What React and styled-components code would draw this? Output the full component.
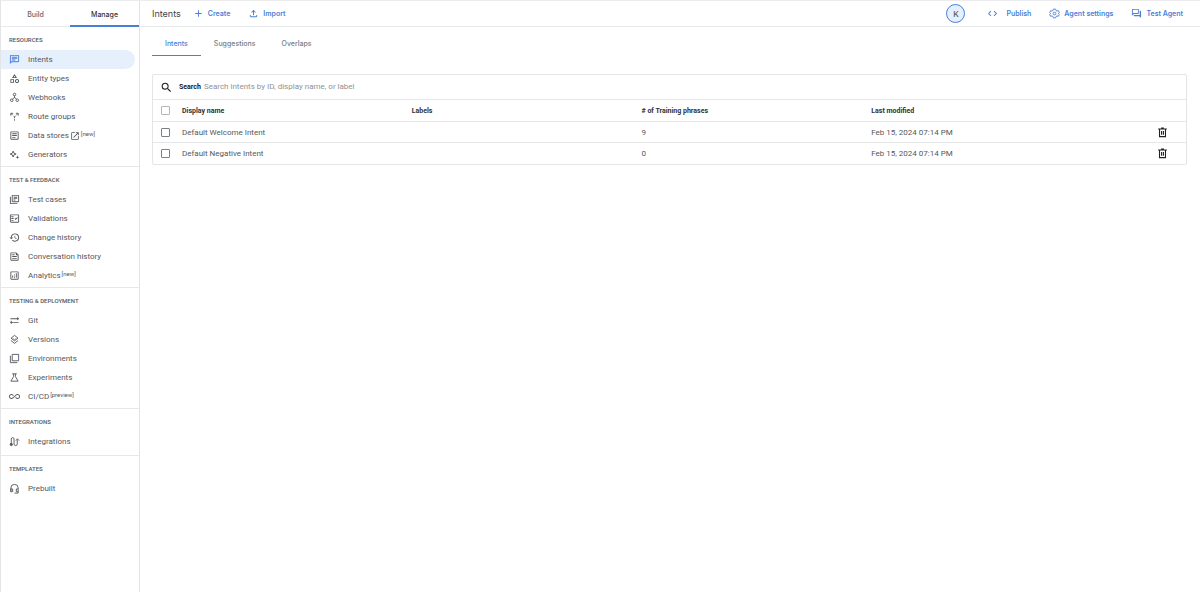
import styled, { createGlobalStyle } from "styled-components";
import {
  MdAdd,
  MdAllInclusive,
  MdCode,
  MdHistory,
  MdOpenInNew,
  MdOutlineAnalytics,
  MdOutlineArticle,
  MdOutlineCategory,
  MdOutlineChat,
  MdOutlineFactCheck,
  MdOutlineFeed,
  MdOutlineFileUpload,
  MdOutlineForum,
  MdOutlineLibraryBooks,
  MdSearch,
  MdSyncAlt,
} from "react-icons/md";

const blue = "#4a7fd6";

const Svg = ({ children, ...props }) => (
  <svg
    viewBox="0 0 24 24"
    width="1em"
    height="1em"
    fill="none"
    stroke="currentColor"
    strokeWidth="2"
    {...props}
  >
    {children}
  </svg>
);

const WebhookIcon = () => (
  <Svg>
    <circle cx="12" cy="5.500" r="2.800" />
    <circle cx="6" cy="18" r="2.800" />
    <circle cx="18" cy="18" r="2.800" />
    <path d="M12 8v5M12 12l-4.500 3.500M12 12l4.500 3.500" />
  </Svg>
);

const RouteIcon = () => (
  <Svg>
    <path d="M12 21v-3M12 16v-3l-2-2M8 9 4.500 5.500M12 13l3-3M16.500 8.500l3-3M4 10V5h5M15 5h5v5" />
  </Svg>
);

const SparkIcon = () => (
  <Svg>
    <path d="M9 4.500l1.800 4.700L15.500 11l-4.700 1.800L9 17.500l-1.800-4.700L2.500 11l4.700-1.800z" />
    <path
      d="M18.500 14l1.200 2.800 2.800 1.200-2.800 1.200-1.200 2.800-1.200-2.800-2.800-1.200 2.800-1.200z"
      fill="currentColor"
      stroke="none"
    />
  </Svg>
);

const VersionsIcon = () => (
  <Svg>
    <path d="M12 3l7.500 6-7.500 6-7.500-6zM4 14l8 6.500 8-6.500" />
    <path d="M8 9.500l4 3 4-3" strokeWidth="1.500" />
  </Svg>
);

const EnvironmentIcon = () => (
  <Svg>
    <path d="M7 3h14v14H7zM3 6v15h15" />
  </Svg>
);

const FlaskIcon = () => (
  <Svg>
    <path d="M7 4h10M10 4v6L4 20h16l-6-10V4" />
  </Svg>
);

const IntegrationIcon = () => (
  <Svg>
    <path d="M5 17V6.500a3 3 0 0 1 6 0v11a3.500 3.500 0 0 0 7 0V8M15 10l3.500-4 3.500 4" />
    <circle cx="5" cy="18.500" r="2.500" fill="currentColor" />
  </Svg>
);

const HeadsetIcon = () => (
  <Svg>
    <path d="M4 19v-8a8 8 0 0 1 16 0v11h-8M4 13h4v6H4zM20 13h-4v6h4" />
  </Svg>
);

const GearIcon = () => (
  <Svg>
    <path
      d="M9.500 2.500h5l.8 3 2.200 1.200 3-.8 2 4-2.200 2.100 2.200 2.100-2 4-3-.8-2.200 1.200-.8 3h-5l-.8-3-2.200-1.200-3 .8-2-4L3.700 12 1.500 9.900l2-4 3 .8 2.200-1.200z"
      strokeLinejoin="round"
    />
    <circle cx="12" cy="12" r="3" />
  </Svg>
);

const TrashIcon = () => (
  <Svg strokeWidth="2.400">
    <path d="M2.500 4.500h19M9 2.500h6M5.500 5v16h13V5M10 8.500V17M14 8.500V17" />
  </Svg>
);

const sections = [
  {
    title: "Resources",
    items: [
      { label: "Intents", icon: MdOutlineChat, active: true },
      { label: "Entity types", icon: MdOutlineCategory },
      { label: "Webhooks", icon: WebhookIcon },
      { label: "Route groups", icon: RouteIcon },
      {
        label: "Data stores",
        icon: MdOutlineArticle,
        external: true,
        tag: "[new]",
      },
      { label: "Generators", icon: SparkIcon },
    ],
  },
  {
    title: "Test & Feedback",
    items: [
      { label: "Test cases", icon: MdOutlineLibraryBooks },
      { label: "Validations", icon: MdOutlineFactCheck },
      { label: "Change history", icon: MdHistory },
      { label: "Conversation history", icon: MdOutlineFeed },
      { label: "Analytics", icon: MdOutlineAnalytics, tag: "[new]" },
    ],
  },
  {
    title: "Testing & Deployment",
    items: [
      { label: "Git", icon: MdSyncAlt },
      { label: "Versions", icon: VersionsIcon },
      { label: "Environments", icon: EnvironmentIcon },
      { label: "Experiments", icon: FlaskIcon },
      { label: "CI/CD", icon: MdAllInclusive, tag: "[preview]" },
    ],
  },
  {
    title: "Integrations",
    items: [{ label: "Integrations", icon: IntegrationIcon }],
  },
  {
    title: "Templates",
    items: [{ label: "Prebuilt", icon: HeadsetIcon }],
  },
];

const intents = [
  { name: "Default Welcome Intent", phrases: 9, date: "Feb 15, 2024 07:14 PM" },
  { name: "Default Negative Intent", phrases: 0, date: "Feb 15, 2024 07:14 PM" },
];

export default function App() {
  return (
    <>
      <GlobalStyle />
      <Page>
        <Sidebar>
          <SideTabs>
            <SideTab>Build</SideTab>
            <SideTab $active>Manage</SideTab>
          </SideTabs>
          <nav>
            {sections.map(({ title, items }) => (
              <Section key={title}>
                <SectionTitle>{title}</SectionTitle>
                {items.map(({ label, icon: Icon, active, external, tag }) => (
                  <NavItem href="#" key={label} $active={active}>
                    <Icon />
                    <NavLabel>
                      {label}
                      {external && <MdOpenInNew />}
                      {tag && <sup>{tag}</sup>}
                    </NavLabel>
                  </NavItem>
                ))}
              </Section>
            ))}
          </nav>
        </Sidebar>

        <Main>
          <TopBar>
            <Title>Intents</Title>
            <ActionGroup $gap={18}>
              <Action $gap={4}>
                <MdAdd />
                Create
              </Action>
              <Action $gap={4}>
                <MdOutlineFileUpload />
                Import
              </Action>
            </ActionGroup>
            <Spacer />
            <Avatar>K</Avatar>
            <ActionGroup $gap={18}>
              <Action $gap={8}>
                <MdCode />
                Publish
              </Action>
              <Action $gap={4}>
                <GearIcon />
                Agent settings
              </Action>
              <Action $gap={4}>
                <MdOutlineForum />
                Test Agent
              </Action>
            </ActionGroup>
          </TopBar>

          <Content>
            <Tabs>
              <Tab $active>Intents</Tab>
              <Tab>Suggestions</Tab>
              <Tab>Overlaps</Tab>
            </Tabs>

            <Card>
              <SearchRow>
                <MdSearch />
                <label htmlFor="search">Search</label>
                <input
                  id="search"
                  placeholder="Search intents by ID, display name, or label"
                />
              </SearchRow>
              <Table>
                <colgroup>
                  <CheckCol />
                  <col />
                  <col />
                  <col />
                  <col />
                  <DeleteCol />
                </colgroup>
                <thead>
                  <tr>
                    <th>
                      <Checkbox type="checkbox" aria-label="Select all" $muted />
                    </th>
                    <th>Display name</th>
                    <th>Labels</th>
                    <th># of Training phrases</th>
                    <th>Last modified</th>
                    <th></th>
                  </tr>
                </thead>
                <tbody>
                  {intents.map(({ name, phrases, date }) => (
                    <tr key={name}>
                      <td>
                        <Checkbox type="checkbox" aria-label={name} />
                      </td>
                      <td>{name}</td>
                      <td></td>
                      <td>{phrases}</td>
                      <td>{date}</td>
                      <td>
                        <DeleteButton aria-label={`Delete ${name}`}>
                          <TrashIcon />
                        </DeleteButton>
                      </td>
                    </tr>
                  ))}
                </tbody>
              </Table>
            </Card>
          </Content>
        </Main>
      </Page>
    </>
  );
}

const GlobalStyle = createGlobalStyle`
  * {
    box-sizing: border-box;
  }

  body {
    margin: 0;
    background: #fff;
    color: #55585c;
    font-family: Roboto, "Liberation Sans", sans-serif;
    font-size: 7px;
  }

  button,
  input {
    margin: 0;
    padding: 0;
    border: 0;
    background: none;
    color: inherit;
    font: inherit;
  }

  button {
    cursor: pointer;
  }

  svg {
    flex: none;
    display: block;
  }
`;

const Page = styled.div`
  display: flex;
  min-height: 100vh;
  border-top: 1px solid #ececee;
  border-left: 1px solid #e4e5e7;
`;

const Sidebar = styled.aside`
  flex: none;
  width: 139px;
  border-right: 1px solid #e2e3e5;
`;

const SideTabs = styled.div`
  display: flex;
  height: 26px;
  border-bottom: 1px solid #e8e9eb;
`;

const SideTab = styled.button`
  flex: 1;
  height: 26px;
  border-top: 2px solid transparent;
  border-bottom: 2px solid ${({ $active }) => ($active ? blue : "transparent")};
  color: ${({ $active }) => ($active ? "#303236" : "#64676b")};
  font-family: Inter, sans-serif;
  font-weight: 500;
`;

const Section = styled.section`
  min-height: 47px;
  padding: 8px 4px 2px 0;

  & + & {
    border-top: 1px solid #e6e7e9;
  }
`;

const SectionTitle = styled.h2`
  margin: 0 0 5px;
  padding-left: 8px;
  font-size: 6px;
  font-weight: 500;
  line-height: 10px;
  text-transform: uppercase;
`;

const NavItem = styled.a`
  display: flex;
  align-items: center;
  gap: 8px;
  height: 19px;
  padding-left: 8px;
  border-radius: 0 10px 10px 0;
  background: ${({ $active }) => ($active ? "#e6effc" : "none")};
  color: #55585c;
  font-size: 8px;
  text-decoration: none;

  > svg {
    color: ${({ $active }) => ($active ? blue : "#55585c")};
    font-size: 11px;
  }
`;

const NavLabel = styled.span`
  display: flex;
  align-items: center;
  gap: 1px;

  svg {
    font-size: 10px;
  }

  sup {
    align-self: flex-start;
    font-size: 6px;
    line-height: 6px;
  }
`;

const Main = styled.main`
  flex: 1;
  min-width: 0;
`;

const TopBar = styled.header`
  display: flex;
  align-items: center;
  height: 26px;
  padding: 0 17px 0 12px;
  border-bottom: 1px solid #e8e9eb;
`;

const Title = styled.h1`
  margin: 0 12px 0 0;
  color: #404347;
  font-family: Inter, sans-serif;
  font-size: 9px;
  font-weight: 400;
`;

const ActionGroup = styled.div`
  display: flex;
  gap: ${({ $gap }) => $gap}px;
`;

const Action = styled.button`
  display: flex;
  align-items: center;
  gap: ${({ $gap }) => $gap}px;
  color: ${blue};
  font-family: Inter, sans-serif;
  font-weight: 600;

  svg {
    font-size: 11px;
  }
`;

const Spacer = styled.div`
  flex: 1;
`;

const Avatar = styled.button`
  width: 19px;
  height: 19px;
  margin-right: 22px;
  border: 1px solid ${blue};
  border-radius: 50%;
  background: #e6effc;
  font-family: Inter, sans-serif;
  font-size: 8px;
  font-weight: 500;
`;

const Content = styled.div`
  padding: 4px 13px 0 12px;
`;

const Tabs = styled.div`
  display: flex;
  margin-bottom: 18px;
`;

const Tab = styled.button`
  height: 25px;
  padding: 0 13px;
  border-bottom: 1px solid ${({ $active }) => ($active ? blue : "transparent")};
  color: ${({ $active }) => ($active ? blue : "#7a7d81")};
  font-family: Inter, sans-serif;
  font-weight: 500;
`;

const Card = styled.div`
  border: 1px solid #e4e5e7;
  border-radius: 2px;
`;

const SearchRow = styled.div`
  display: flex;
  align-items: center;
  height: 24px;
  padding-left: 7px;
  color: #202124;

  svg {
    margin-right: 6px;
    font-size: 13px;
  }

  label {
    margin-right: 3px;
    font-weight: 700;
    line-height: 10px;
  }

  input {
    flex: 1;
    height: 10px;
    outline: none;
    font-size: 8px;
    line-height: 10px;
  }

  input::placeholder {
    color: #8f9296;
    opacity: 1;
  }
`;

const Table = styled.table`
  width: 100%;
  border-collapse: collapse;
  table-layout: fixed;

  th,
  td {
    padding: 0;
    border-top: 1px solid #e6e7e9;
    text-align: left;
  }

  th {
    height: 22px;
    color: #303236;
    font-weight: 700;
  }

  td {
    height: 21px;
    font-size: 8px;
  }

  th:first-child,
  td:first-child {
    padding-left: 8px;
  }

  td:last-child {
    padding-right: 18px;
  }
`;

const CheckCol = styled.col`
  width: 29px;
`;

const DeleteCol = styled.col`
  width: 85px;
`;

const Checkbox = styled.input`
  display: block;
  appearance: none;
  width: 9px;
  height: 9px;
  border: 1px solid ${({ $muted }) => ($muted ? "#b4b6b9" : "#7c7f83")};
  border-radius: 1px;

  &:checked {
    background: ${blue};
  }
`;

const DeleteButton = styled.button`
  display: block;
  margin-left: auto;
  color: #202124;
  font-size: 11px;
`;
